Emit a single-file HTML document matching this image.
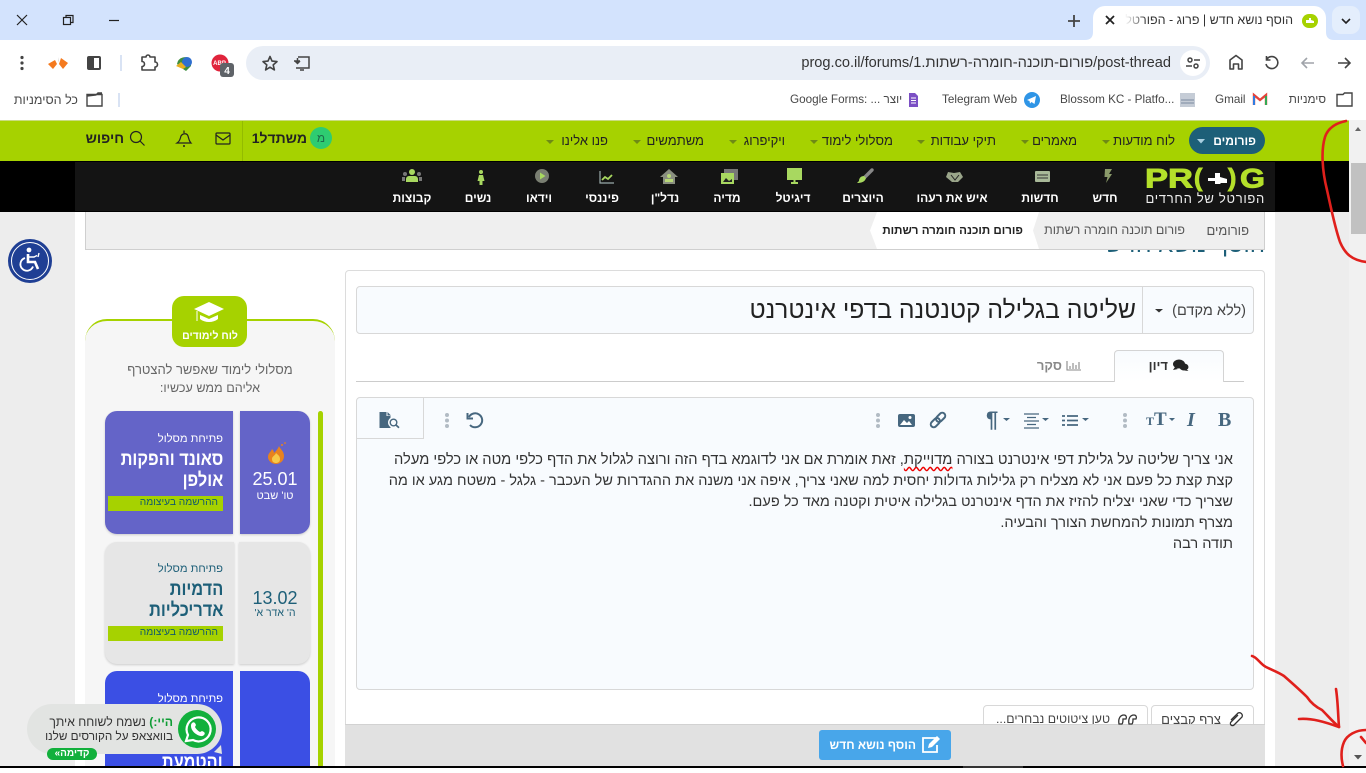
<!DOCTYPE html>
<html lang="he"><head><meta charset="utf-8"><title>הוסף נושא חדש | פרוג - הפורטל</title>
<style>
html,body{margin:0;padding:0;width:1366px;height:768px;overflow:hidden;background:#fff;font-family:"Liberation Sans","Noto Sans CJK JP",sans-serif}
div,span{box-sizing:border-box}
.a{position:absolute}
.t{position:absolute;white-space:nowrap;direction:rtl;line-height:1}
.c{position:absolute;white-space:nowrap;direction:rtl;line-height:1;transform:translateX(-50%)}
.b{font-weight:bold}
.g{font-size:13px;color:#222}
.n{font-size:12px;color:#fff;font-weight:bold}
.bm{font-size:11.7px;color:#474747}
.e{position:absolute;right:133px;white-space:nowrap;direction:rtl;font-size:14.6px;line-height:21px;color:#333}
.h{transform:scaleX(.86);transform-origin:right center}
</style></head><body>

<!-- chrome -->
<div class="a" style="left:0;top:0;width:1366px;height:40px;background:#d3e3fd"></div>
<div class="a" style="left:1093px;top:6px;width:233px;height:36px;background:#fff;border-radius:12px 12px 0 0"></div>
<div class="a" style="left:1332px;top:6px;width:28px;height:28px;background:#e4eefc;border-radius:9px"></div>
<div class="t" style="right:73px;top:14px;font-size:12.5px;color:#333;width:168px;overflow:hidden;-webkit-mask-image:linear-gradient(to right,transparent 0,#000 22px)">הוסף נושא חדש | פרוג - הפורטל</div>
<div class="a" style="left:0;top:40px;width:1366px;height:80px;background:#fff;border-radius:10px 10px 0 0"></div>
<div class="a" style="left:246px;top:46px;width:964px;height:34px;background:#e9eef6;border-radius:17px"></div>
<div class="a" style="left:1180px;top:50px;width:26px;height:26px;background:#fff;border-radius:50%"></div>
<div class="a" dir="ltr" style="right:195px;top:55px;white-space:nowrap;font-size:14.6px;line-height:16px;color:#333">prog.co.il/forums/פורום-תוכנה-חומרה-רשתות.1/post-thread</div>
<div class="t bm" style="right:40px;top:94px">סימניות</div>
<div class="a bm" dir="ltr" style="left:1215px;top:94px;line-height:12px">Gmail</div>
<div class="a bm" dir="ltr" style="left:1060px;top:94px;line-height:12px;white-space:nowrap">Blossom KC - Platfo...</div>
<div class="a bm" dir="ltr" style="left:942px;top:94px;line-height:12px;white-space:nowrap">Telegram Web</div>
<div class="a bm" dir="ltr" style="left:790px;top:94px;line-height:12px;white-space:nowrap">Google Forms: ... יוצר</div>
<div class="t bm" style="right:1288px;top:94px;font-size:12.5px">כל הסימניות</div>

<!-- page backgrounds -->
<div class="a" style="left:0;top:120px;width:1349px;height:648px;background:#ededed"></div>
<div class="a" style="left:75px;top:212px;width:1200px;height:556px;background:#fff"></div>

<!-- green nav -->
<div class="a" style="left:0;top:120px;width:1349px;height:41px;background:#a6d200;border-top:1px solid #c9dc80"></div>
<div class="a" style="left:1189px;top:127px;width:76px;height:27px;background:#1d5f78;border-radius:14px"></div>
<div class="t b" style="right:110px;top:135px;font-size:12px;color:#fff">פורומים</div>
<div class="t g" style="right:191px;top:134px">לוח מודעות</div>
<div class="t g" style="right:289px;top:134px">מאמרים</div>
<div class="t g" style="right:370px;top:134px">תיקי עבודות</div>
<div class="t g" style="right:473px;top:134px">מסלולי לימוד</div>
<div class="t g" style="right:581px;top:134px">ויקיפרוג</div>
<div class="t g" style="right:662px;top:134px">משתמשים</div>
<div class="t g" style="right:758px;top:134px">פנו אלינו</div>
<div class="a" style="left:242px;top:121px;width:1px;height:40px;background:#93bb00"></div>
<div class="a" style="left:310px;top:127px;width:22px;height:22px;background:#2ecc71;border-radius:50%"></div>
<div class="c" style="left:321px;top:132px;font-size:12px;color:#1d6b4a">מ</div>
<div class="t b" style="right:1059px;top:131px;font-size:14px;color:#222">משתדל1</div>
<div class="t b" style="right:1242px;top:131px;font-size:14px;color:#222">חיפוש</div>

<!-- black nav -->
<div class="a" style="left:0;top:161px;width:1349px;height:51px;background:#000"></div>
<div class="a" style="left:75px;top:162px;width:1200px;height:49px;background:#141414"></div>
<div class="c n" style="left:1105px;top:192px">חדש</div>
<div class="c n" style="left:1040px;top:192px">חדשות</div>
<div class="c n" style="left:952px;top:192px">איש את רעהו</div>
<div class="c n" style="left:863px;top:192px">היוצרים</div>
<div class="c n" style="left:793px;top:192px">דיגיטל</div>
<div class="c n" style="left:727px;top:192px">מדיה</div>
<div class="c n" style="left:665px;top:192px">נדל"ן</div>
<div class="c n" style="left:602px;top:192px">פיננסי</div>
<div class="c n" style="left:539px;top:192px">וידאו</div>
<div class="c n" style="left:478px;top:192px">נשים</div>
<div class="c n" style="left:412px;top:192px">קבוצות</div>
<div class="t" style="right:101px;top:192px;font-size:13px;color:#eee;letter-spacing:.7px">הפורטל של החרדים</div>

<!-- hidden page title + breadcrumb -->
<div class="t" style="right:101px;top:233px;font-size:24px;color:#1d5f78;z-index:0">הוסף נושא חדש</div>
<div class="a" style="left:85px;top:212px;width:1180px;height:38px;background:#efefef;border:1px solid #cfcfcf;border-top:0;z-index:1"></div>
<div class="a" style="left:870px;top:212px;width:169px;height:37px;background:#fff;clip-path:polygon(7px 0,100% 0,calc(100% - 6px) 50%,100% 100%,7px 100%,0 50%);z-index:2"></div>
<div class="t" style="right:117px;top:224px;font-size:13px;color:#555;z-index:2">פורומים</div>
<div class="t" style="right:181px;top:224px;font-size:12.45px;color:#555;z-index:2">פורום תוכנה חומרה רשתות</div>
<div class="t b" style="right:343px;top:225px;font-size:11.6px;color:#222;z-index:2">פורום תוכנה חומרה רשתות</div>

<!-- main box -->
<div class="a" style="left:345px;top:270px;width:920px;height:498px;background:#fff;border:1px solid #dcdcdc;border-radius:4px"></div>
<div class="a" style="left:356px;top:286px;width:898px;height:48px;background:#f8fbfe;border:1px solid #d8d8d8;border-radius:4px"></div>
<div class="a" style="left:1142px;top:287px;width:1px;height:46px;background:#d8d8d8"></div>
<div class="t" style="right:120px;top:304px;font-size:14.5px;color:#444">(ללא מקדם)</div>
<div class="t" style="right:230px;top:299px;font-size:24.7px;color:#222">שליטה בגלילה קטנטנה בדפי אינטרנט</div>

<div class="a" style="left:356px;top:381px;width:888px;height:1px;background:#ccc"></div>
<div class="a" style="left:1114px;top:350px;width:110px;height:32px;background:linear-gradient(#f8fbfe,#fff);border:1px solid #d4d4d4;border-bottom:0;border-radius:4px 4px 0 0"></div>
<div class="t b" style="right:198px;top:359px;font-size:13px;color:#333">דיון</div>
<div class="t b" style="right:304px;top:359px;font-size:13px;color:#888">סקר</div>

<div class="a" style="left:356px;top:397px;width:898px;height:293px;background:#f8fbfe;border:1px solid #d8d8d8;border-radius:4px"></div>
<div class="a" style="left:356px;top:397px;width:68px;height:42px;border:1px solid #d8d8d8;border-radius:4px 0 0 0;border-top:0;border-left:0"></div>
<div class="a" style="left:1218px;top:409px;font:bold 20px 'Liberation Serif',serif;color:#47677f;line-height:22px">B</div>
<div class="a" style="left:1187px;top:409px;font:italic bold 20px 'Liberation Serif',serif;color:#47677f;line-height:22px">I</div>
<div class="a" style="left:1146px;top:412px;font:bold 12px 'Liberation Serif',serif;color:#47677f;line-height:18px">T</div>
<div class="a" style="left:1154px;top:409px;font:bold 19px 'Liberation Serif',serif;color:#47677f;line-height:22px">T</div>
<div class="a" style="left:986px;top:408px;font:bold 22px 'Liberation Sans',sans-serif;color:#47677f;line-height:24px">¶</div>

<div class="e" style="top:450px;font-size:14.7px">אני צריך שליטה על גלילת דפי אינטרנט בצורה <span style="text-decoration:underline wavy #e00;text-underline-offset:2px">מדוייקת</span>, זאת אומרת אם אני לדוגמא בדף הזה ורוצה לגלול את הדף כלפי מטה או כלפי מעלה</div>
<div class="e" style="top:471px;font-size:14.5px">קצת קצת כל פעם אני לא מצליח רק גלילות גדולות יחסית למה שאני צריך, איפה אני משנה את ההגדרות של העכבר - גלגל - משטח מגע או מה</div>
<div class="e" style="top:492px;font-size:14.5px">שצריך כדי שאני יצליח להזיז את הדף אינטרנט בגלילה איטית וקטנה מאד כל פעם.</div>
<div class="e" style="top:513px;font-size:14.5px">מצרף תמונות להמחשת הצורך והבעיה.</div>
<div class="e" style="top:534px">תודה רבה</div>

<div class="a" style="left:1151px;top:705px;width:103px;height:30px;background:#fff;border:1px solid #d8d8d8;border-radius:4px"></div>
<div class="a" style="left:983px;top:705px;width:165px;height:30px;background:#fff;border:1px solid #d8d8d8;border-radius:4px"></div>
<div class="t" style="right:145px;top:713px;font-size:13px;color:#444">צרף קבצים</div>
<div class="t" style="right:256px;top:713px;font-size:12.3px;color:#444">טען ציטוטים נבחרים...</div>
<div class="a" style="left:345px;top:724px;width:920px;height:44px;background:#e1e1e1;border-top:1px solid #d2d2d2"></div>
<div class="a" style="left:819px;top:730px;width:132px;height:30px;background:#48a6ea;border-radius:3px"></div>
<div class="t b" style="right:450px;top:739px;font-size:12px;color:#fff">הוסף נושא חדש</div>

<!-- sidebar -->
<div class="a" style="left:85px;top:319px;width:250px;height:449px;background:#f6f6f6;border-top:2px solid #a6d200;border-radius:22px 22px 0 0"></div>
<div class="a" style="left:172px;top:296px;width:75px;height:51px;background:#a6d200;border-radius:12px"></div>
<div class="c b" style="left:210px;top:331px;font-size:10.5px;color:#fff">לוח לימודים</div>
<div class="c" style="left:210px;top:363px;font-size:13px;color:#666">מסלולי לימוד שאפשר להצטרף</div>
<div class="c" style="left:210px;top:382px;font-size:12.6px;color:#666">אליהם ממש עכשיו:</div>
<div class="a" style="left:318px;top:411px;width:5px;height:357px;background:#a6d200;border-radius:3px 3px 0 0"></div>

<div class="a" style="left:105px;top:411px;width:128px;height:123px;background:#6464c8;border-radius:12px 0 0 12px;box-shadow:0 1px 2px #ccc"></div>
<div class="a" style="left:240px;top:411px;width:70px;height:123px;background:#6464c8;border-radius:0 12px 12px 0;box-shadow:0 1px 2px #ccc"></div>
<div class="t" style="right:1143px;top:434px;font-size:11.2px;color:#fff">פתיחת מסלול</div>
<div class="t b h" style="right:1143px;top:450px;font-size:19px;color:#fff">סאונד והפקות</div>
<div class="t b h" style="right:1143px;top:471px;font-size:19px;color:#fff">אולפן</div>
<div class="a" style="left:108px;top:496px;width:115px;height:15px;background:#a6d200"></div>
<div class="t" style="right:1148px;top:498px;font-size:10.2px;color:#135a6a">ההרשמה בעיצומה</div>
<div class="c" style="left:275px;top:470px;font-size:18px;color:#fff">25.01</div>
<div class="c" style="left:275px;top:491px;font-size:11px;color:#fff">טו' שבט</div>

<div class="a" style="left:105px;top:542px;width:129px;height:122px;background:#e6e6e6;border-radius:12px 0 0 12px;box-shadow:0 1px 2px #ccc"></div>
<div class="a" style="left:239px;top:542px;width:71px;height:122px;background:#e6e6e6;border-radius:0 12px 12px 0;box-shadow:0 1px 2px #ccc"></div>
<div class="t" style="right:1143px;top:564px;font-size:11.2px;color:#1d5f78">פתיחת מסלול</div>
<div class="t b h" style="right:1143px;top:580px;font-size:19px;color:#1d5f78">הדמיות</div>
<div class="t b h" style="right:1143px;top:601px;font-size:19px;color:#1d5f78">אדריכליות</div>
<div class="a" style="left:108px;top:626px;width:115px;height:15px;background:#a6d200"></div>
<div class="t" style="right:1148px;top:628px;font-size:10.2px;color:#135a6a">ההרשמה בעיצומה</div>
<div class="c" style="left:275px;top:589px;font-size:18px;color:#1d5f78">13.02</div>
<div class="c" style="left:275px;top:608px;font-size:10.5px;color:#1d5f78">ה' אדר א'</div>

<div class="a" style="left:105px;top:671px;width:128px;height:97px;background:#3b4fe4;border-radius:12px 0 0 0"></div>
<div class="a" style="left:240px;top:671px;width:70px;height:97px;background:#3b4fe4;border-radius:0 12px 0 0"></div>
<div class="t" style="right:1143px;top:694px;font-size:11.2px;color:#fff">פתיחת מסלול</div>
<div class="t b h" style="right:1143px;top:753px;font-size:19px;color:#fff">והטמעת</div>

<!-- whatsapp -->
<div class="a" style="left:27px;top:704px;width:195px;height:50px;background:#e2e4e2;border-radius:25px"></div>
<div class="t" style="right:1193px;top:716px;font-size:12.2px;color:#333"><span style="color:#0f9d35;font-weight:bold">היי:)</span> נשמח לשוחח איתך</div>
<div class="t" style="right:1193px;top:731px;font-size:11.7px;color:#333">בוואצאפ על הקורסים שלנו</div>
<div class="a" style="left:47px;top:748px;width:50px;height:12px;background:#12b03c;border-radius:6px"></div>
<div class="c b" style="left:72px;top:749px;font-size:10px;color:#fff">קדימה»</div>
<div class="a" style="left:178px;top:710px;width:38px;height:38px;background:#12b03c;border-radius:50%"></div>

<!-- accessibility -->
<div class="a" style="left:8px;top:239px;width:44px;height:44px;background:#1f3f94;border-radius:50%"></div>
<div class="a" style="left:11px;top:242px;width:38px;height:38px;border:1.5px solid #fff;border-radius:50%"></div>

<!-- scrollbar -->
<div class="a" style="left:1349px;top:120px;width:17px;height:648px;background:#f1f1f1"></div>
<div class="a" style="left:1351px;top:163px;width:15px;height:71px;background:#c1c1c1"></div>
<div class="a" style="left:0;top:766px;width:1366px;height:2px;background:#000"></div>
<div class="a" style="left:963px;top:766px;width:60px;height:2px;background:#333"></div>

<!-- icon overlay -->
<svg class="a" style="left:0;top:0;z-index:5" width="1366" height="768" viewBox="0 0 1366 768" fill="none">
<!-- window controls -->
<g stroke="#222" stroke-width="1.2"><path d="M17 15L27 25M27 15L17 25"/><path d="M109 20.5H119"/><rect x="63.5" y="17.5" width="7" height="7"/><path d="M66 17V15.5H73V22.5H71"/></g>
<!-- tab -->
<path d="M1085 40Q1093 40 1093 32V40ZM1326 32Q1326 40 1334 40H1326Z" fill="#fff"/>
<path d="M1106 16L1114 24M1114 16L1106 24" stroke="#222" stroke-width="1.8"/>
<path d="M1074 15V27M1068 21H1080" stroke="#444" stroke-width="1.8"/>
<path d="M1342 19L1346 23L1350 19" stroke="#222" stroke-width="1.6"/>
<rect x="1302" y="14" width="16" height="14" rx="7" fill="#a6d200"/><path d="M1306 23h8v-2l-3-1v-2h-2v2h-3z" fill="#fff"/>
<!-- toolbar left -->
<g fill="#444"><circle cx="22" cy="57.5" r="1.6"/><circle cx="22" cy="63" r="1.6"/><circle cx="22" cy="68.5" r="1.6"/></g>
<path d="M48 64L55 60L57 64L53 69ZM68 63L61 58L59 64L63 69Z" fill="#f47a1f"/><path d="M58 57l1 4-1 1z" fill="#ddd"/>
<rect x="87" y="56" width="14" height="14" rx="2" fill="#444"/><rect x="94" y="58" width="5" height="10" fill="#fff"/>
<path d="M121 55V71M119 93V107" stroke="#c9d7f0" stroke-width="1.4"/>
<path d="M142 57h4a2 2 0 0 1 4 0h5v5a2.5 2.5 0 0 1 0 5v3h-13v-3.5a2.5 2.5 0 0 0 0-5z" stroke="#444" stroke-width="1.6" stroke-linejoin="round"/>
<path d="M177 64a8 8 0 0 1 14-4v6l-5 5-3-2z" fill="#3f8f3f"/><circle cx="187" cy="62" r="5" fill="#2f6fd0"/><path d="M176 66l5-4 5 5-3 2z" fill="#e8b020"/>
<circle cx="220" cy="63" r="8.5" fill="#e0243c"/><text x="219.500" y="65" font-size="6" font-weight="bold" fill="#fff" text-anchor="middle" font-family="Liberation Sans">ABP</text><rect x="220" y="63" width="14" height="14" rx="3" fill="#5f6368"/>
<text x="227" y="74" font-size="10" font-weight="bold" fill="#fff" text-anchor="middle" font-family="Liberation Sans">4</text>
<path d="M270 56.5l2 4.6 5 .5-3.8 3.3 1.2 5-4.4-2.700-4.400 2.700 1.200-5-3.800-3.300 5-.5z" stroke="#444" stroke-width="1.600" stroke-linejoin="round"/>
<path d="M298 57h11v11h-13M294 61h6M297.500 58v5.500M295 61l2.500 2.500 2.500-2.500M300 70h4" stroke="#444" stroke-width="1.500"/>
<!-- toolbar right -->
<g stroke="#444" stroke-width="1.500"><circle cx="1190" cy="60" r="2"/><path d="M1194 60h6M1186 66h6"/><circle cx="1196" cy="66" r="2"/></g>
<path d="M1230 69V60l6-4.500 6 4.500V69H1238.500V64H1233.500V69Z" stroke="#444" stroke-width="1.600" stroke-linejoin="round"/>
<path d="M1267 59a6 6 0 1 1-1 5M1266.500 56v4h4" stroke="#444" stroke-width="1.600"/>
<path d="M1314 63H1302M1307 58L1302 63L1307 68" stroke="#a0a4aa" stroke-width="1.600"/>
<path d="M1338 63H1350M1345 58L1350 63L1345 68" stroke="#444" stroke-width="1.600"/>
<!-- bookmarks -->
<path d="M1337 94.500h6l1.500-1.500h7.500v13h-15z" stroke="#444" stroke-width="1.400"/>
<path d="M87 94.500h15v11.500h-15zM87 96l9-1 2-2h4" stroke="#444" stroke-width="1.400"/>
<path d="M1254 105V95l6 5 6-5v10" stroke="#e5423a" stroke-width="2.400"/><path d="M1254 96v9" stroke="#2f7de0" stroke-width="2"/><path d="M1266 96v9" stroke="#34a853" stroke-width="2"/>
<rect x="1180" y="93" width="15" height="14" fill="#c5ccd6"/><path d="M1181 100h13M1181 103h13" stroke="#7c8aa0"/>
<circle cx="1032" cy="100" r="8" fill="#2f95e6"/><path d="M1027 100l9-4-1.500 8-3-2-1.500 1.500-.5-2.500z" fill="#fff"/>
<path d="M909 93h6l3 3v11h-9z" fill="#7b4fc4"/><path d="M911 98h5M911 100.500h5M911 103h5" stroke="#fff"/>
<!-- green nav -->
<path d="M1197 139h8l-4 4.500z" fill="#a9cfe0"/>
<g fill="#6e8a15"><path d="M1102 140h8l-4 4z"/><path d="M1021 140h8l-4 4z"/><path d="M917 140h8l-4 4z"/><path d="M810 140h8l-4 4z"/><path d="M729 140h8l-4 4z"/><path d="M633 140h8l-4 4z"/><path d="M546 140h8l-4 4z"/></g>
<rect x="216" y="133" width="14" height="11" rx="1" stroke="#222" stroke-width="1.200"/><path d="M216 135l7 5 7-5" stroke="#222" stroke-width="1.200"/>
<path d="M177 143h14c-2-2-2-4-3-7-1-3-5-3-7 0-1 3-1 5-4 7zM184 130.500V133" stroke="#222" stroke-width="1.200"/><circle cx="184" cy="146" r="1" fill="#222"/>
<circle cx="136" cy="137" r="5.500" stroke="#222" stroke-width="1.200"/><path d="M140 141l4.500 4.500" stroke="#222" stroke-width="1.200"/>
<!-- black nav icons -->
<path d="M1105 169h7l-3 5h3l-6 9 1.500-6h-3z" fill="#8a9a6a"/>
<rect x="1035" y="171" width="15" height="11" rx="1" fill="#a8b898"/><path d="M1037 175h11M1037 178h11" stroke="#333"/>
<path d="M948 172l6 1 6-1 3 5-5 5h-6l-6-5z" fill="#9aa58a"/><path d="M951 175l4 5 4-5" stroke="#222"/>
<path d="M872 170L864 178" stroke="#888" stroke-width="3.400" stroke-linecap="round"/><path d="M864 176c-3 0-5 2-5 5l-2 2c4 0 8-1 9-5z" fill="#a8d860"/>
<rect x="787" y="168" width="15" height="12" fill="#a8d860"/><path d="M791 183h7M794.500 180v3" stroke="#a8d860" stroke-width="2"/>
<rect x="724" y="169" width="14" height="11" fill="#777"/><rect x="721" y="173" width="13" height="11" fill="#a8d860"/><path d="M723 182l3-4 3 3 3-2v3z" fill="#222"/>
<path d="M669 169l-9 8h3v7h12v-7h3z" fill="#8a8f80"/><circle cx="669" cy="176" r="2" fill="#b8d878"/><rect x="665" y="179" width="8" height="3" fill="#b8d878"/>
<path d="M600 171v12h14" stroke="#9aa" stroke-width="1.200"/><path d="M602 180l3-3 3 2 4-4" stroke="#a8d860" stroke-width="1.800"/>
<circle cx="542" cy="176" r="7" fill="#7a7f72"/><path d="M540 172.500l5.500 3.500-5.500 3.500z" fill="#a8d860"/>
<circle cx="481" cy="172" r="2" fill="#a8d860"/><path d="M479 175h4l1.500 6h-2v4h-3v-4h-2z" fill="#a8d860"/>
<circle cx="412" cy="172" r="3" fill="#a8d860"/><path d="M406 182v-3a3 3 0 0 1 3-3h6a3 3 0 0 1 3 3v3z" fill="#a8d860"/><circle cx="405" cy="174" r="2" fill="#777"/><circle cx="419" cy="174" r="2" fill="#777"/><rect x="402" y="177" width="3" height="4" fill="#777"/><rect x="419" y="177" width="3" height="4" fill="#777"/>
<!-- logo -->
<g font-family="Liberation Sans" font-weight="bold" fill="#b4e02a" stroke="#b4e02a" stroke-width=".9"><text x="1145" y="187.500" font-size="27" textLength="48" lengthAdjust="spacingAndGlyphs">PR</text><text x="1194" y="186" font-size="25">(</text><text x="1228" y="186" font-size="25">)</text><text x="1240" y="187.500" font-size="27" textLength="25" lengthAdjust="spacingAndGlyphs">G</text></g>
<path d="M1208 178h7v-5h5v4l7 2v4h-6l-1 1h-5v-3h-7z" fill="#fff"/>
<!-- title caret -->
<path d="M1155 309h8l-4 3.500z" fill="#333"/>
<!-- tab icons -->
<ellipse cx="1179" cy="364" rx="6" ry="4.500" fill="#222"/><path d="M1175 367l-2 3 5-1z" fill="#222"/><ellipse cx="1184" cy="367" rx="4.500" ry="3.500" fill="#222"/><path d="M1186 369l2.500 2-4-.5z" fill="#222"/>
<path d="M1067 361v9h14M1070 366v3M1073 363v6M1076 365v4M1079 362v7" stroke="#888" stroke-width="1.100"/>
<!-- editor icons -->
<g fill="#47677f"><path d="M1169 418h6l-3 3z"/><path d="M1003 418h7l-3.500 3z"/><path d="M1042 418h7l-3.500 3z"/><path d="M1082 418h7l-3.500 3z"/></g>
<g stroke="#47677f" stroke-width="1.800"><path d="M1067 416h11M1067 420.500h11M1067 425h11"/><path d="M1062 416h3M1062 420.500h3M1062 425h3"/><path d="M1024 414h15M1027 417.500h9M1024 421h15M1027 424.500h9M1024 428h15" stroke-width="1.200"/></g>
<g transform="rotate(-45 938 420)" stroke="#47677f" stroke-width="2"><rect x="929" y="417" width="10.500" height="6" rx="3"/><rect x="936.500" y="417" width="10.500" height="6" rx="3"/></g>
<rect x="898" y="414" width="17" height="13" rx="2" fill="#47677f"/><path d="M900 425l4-5 3 3 2-2 3 4z" fill="#fff"/><circle cx="910" cy="417.500" r="1.500" fill="#fff"/>
<g fill="#b2bbc4"><circle cx="1125" cy="415" r="2"/><circle cx="1125" cy="420.500" r="2"/><circle cx="1125" cy="426" r="2"/><circle cx="878" cy="415" r="2"/><circle cx="878" cy="420.500" r="2"/><circle cx="878" cy="426" r="2"/><circle cx="447" cy="415" r="2"/><circle cx="447" cy="420.500" r="2"/><circle cx="447" cy="426" r="2"/></g>
<path d="M469 417a7 7 0 1 1 1 8M467.500 413v5.500h5.500" stroke="#47677f" stroke-width="2"/>
<path d="M379.500 412h7v4h4v12h-11z" fill="#47677f"/><path d="M387.500 412l3.500 3.500h-3.500z" fill="#47677f"/><circle cx="393.500" cy="422.500" r="5.500" fill="#f8fbfe"/><circle cx="393.500" cy="422.500" r="3.300" stroke="#47677f" stroke-width="1.400"/><path d="M396 425l3 2.800" stroke="#47677f" stroke-width="1.700"/>
<!-- attach -->
<path d="M1231 720l7-7a3 3 0 0 1 4 4l-8 8a2 2 0 0 1-3-3l7-7" stroke="#333" stroke-width="1.300"/>
<path d="M1119 724c-1-5 1-9 5-9 2 0 3 2 2 4h-3c0 2 0 4-1 5zM1129 724c-1-5 1-9 5-9 2 0 3 2 2 4h-3c0 2 0 4-1 5z" stroke="#333" stroke-width="1.300"/>
<!-- submit icon -->
<path d="M936 738h-13v14h14v-7" stroke="#fff" stroke-width="1.800"/><path d="M928 748l1-4 8-8 3 3-8 8z" fill="#fff"/>
<!-- sidebar icons -->
<path d="M209 302l15 7-15 7-15-7z" fill="#fff"/><path d="M200 315v4c5 4 13 4 18 0v-4l-9 4z" fill="#fff"/><path d="M197 311v10" stroke="#fff"/>
<path d="M279 446c1 3 5 5 5 10 0 5-4 8-8 8s-8-3-8-7c0-4 3-5 4-8 1 1 2 2 2 4 2-2 4-4 5-7z" fill="#e8821e"/><path d="M276 453c2 2 4 3 4 6s-2 4-4 4-4-1-4-4 3-3 4-6z" fill="#f7c948"/><circle cx="282" cy="445" r="1" fill="#e8821e"/><circle cx="285" cy="443" r=".9" fill="#e8821e"/>
<!-- whatsapp -->
<path d="M221 745l1 9-8-2z" fill="#e2e4e2"/>
<path d="M186 741l2-6a12 12 0 1 1 5 5z" stroke="#fff" stroke-width="2.200"/><path d="M192 723c1-1 2-1 3 0l1 2-1 2c1 2 3 4 5 5l2-1 2 1c1 1 1 2 0 3-2 2-5 1-8-1s-5-5-5-8c0-1 0-2 1-3z" fill="#fff"/>
<!-- accessibility -->
<circle cx="29" cy="250" r="2.400" fill="#fff"/><path d="M28 254v8h7l3 7" stroke="#fff" stroke-width="2.600"/><path d="M29 257h5l3-1.500M39 253l-1 4" stroke="#fff" stroke-width="1.400"/><path d="M25 258a6.500 6.500 0 1 0 8 8.500" stroke="#fff" stroke-width="1.800"/>
<!-- scrollbar arrows -->
<path d="M1355 131h6l-3-4z" fill="#666"/><path d="M1354 755h8l-4 4.500z" fill="#555"/>
<!-- red annotations -->
<g stroke="#e0201c" stroke-width="2.600" stroke-linecap="round" stroke-linejoin="round">
<path d="M1346 121C1336 123 1328 128 1325 137C1321 150 1322 170 1327 190C1331 208 1335 228 1340 242C1345 254 1352 260 1366 262"/>
<path d="M1252 656C1257 657 1260 664 1266 667C1272 670 1278 672 1284 676C1292 683 1300 690 1307 697C1311 703 1316 707 1322 710C1328 716 1333 722 1339 727"/>
<path d="M1336 689C1338 702 1338 715 1339 727M1299 719C1312 718 1325 722 1339 727"/>
<path d="M1366 730C1356 730 1347 735 1344 742C1341 749 1341 758 1343 766M1361 737L1366 743"/>
</g>
</svg>
</body></html>
